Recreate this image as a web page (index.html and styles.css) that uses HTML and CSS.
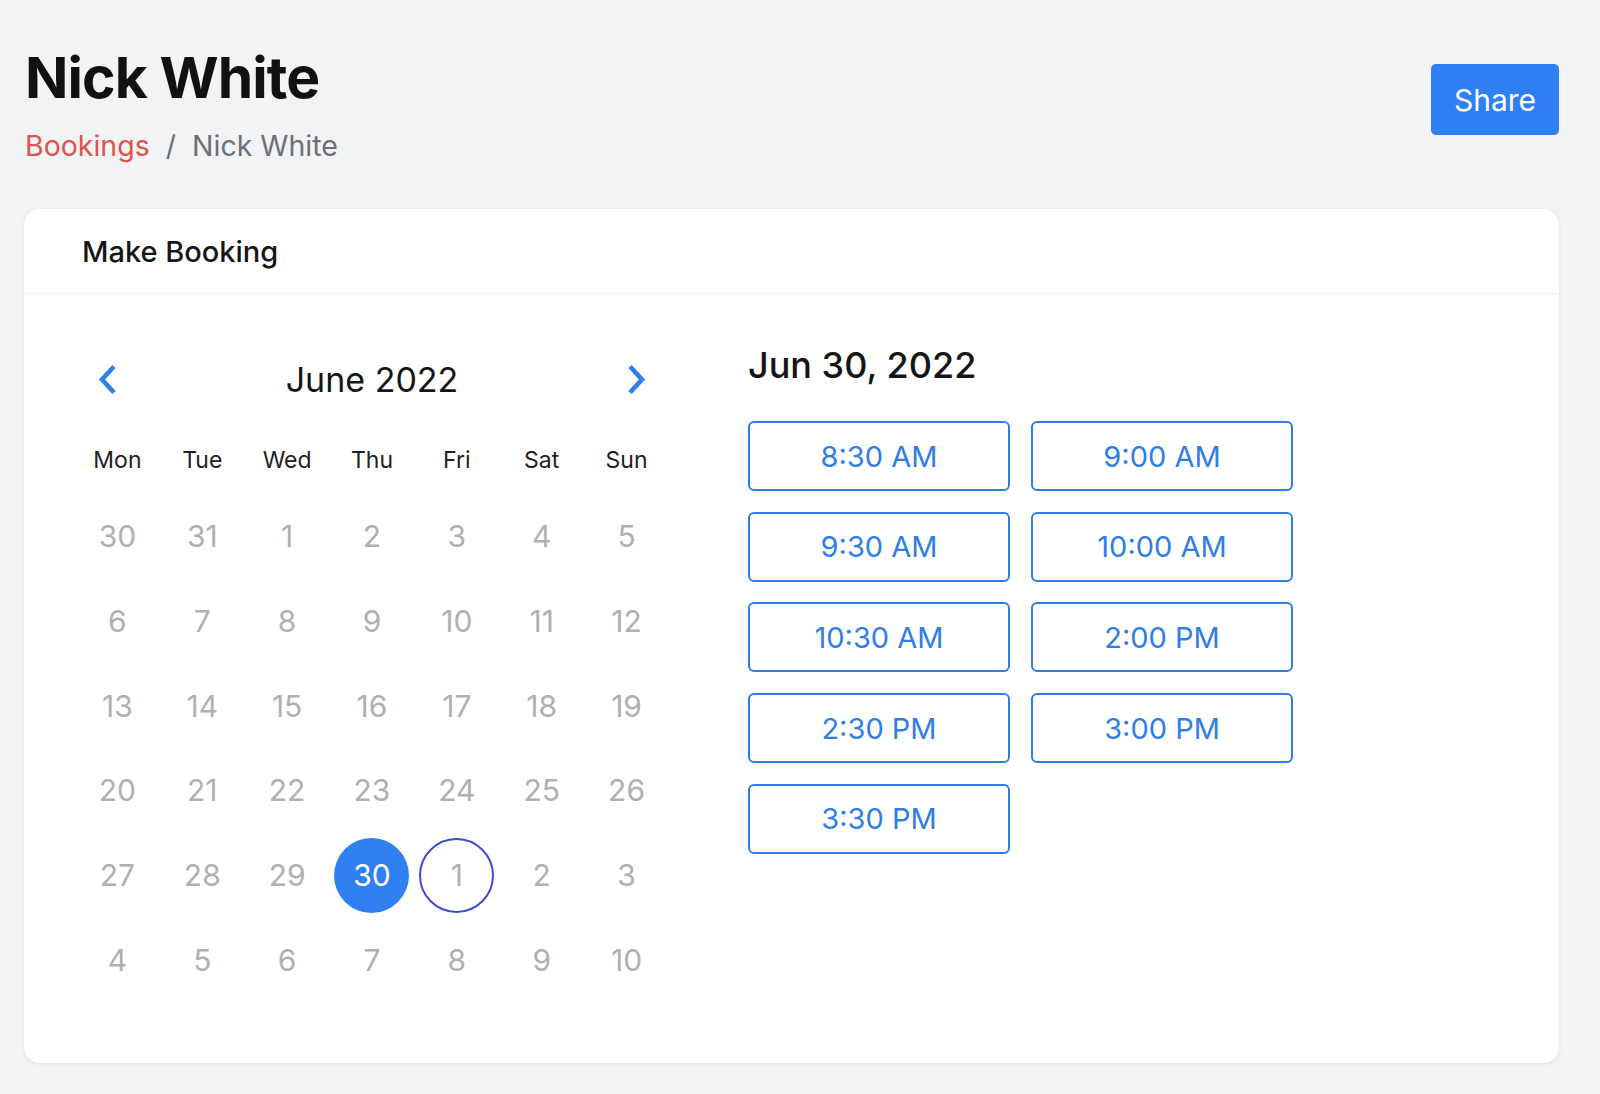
FILE: index.html
```html
<!DOCTYPE html>
<html lang="en">
<head>
<meta charset="utf-8">
<title>Nick White - Bookings</title>
<link rel="stylesheet" href="styles.css">
</head>
<body>
<div class="page">
  <header class="page-header">
    <div class="titles">
      <h1 class="title">Nick White</h1>
      <nav class="breadcrumb">
        <a class="crumb-link" href="#">Bookings</a>
        <span class="crumb-sep">/</span>
        <span class="crumb-current">Nick White</span>
      </nav>
    </div>
    <button class="share-btn">Share</button>
  </header>

  <section class="card">
    <div class="card-header">Make Booking</div>
    <div class="card-body">
      <div class="calendar">
        <div class="cal-nav">
          <button class="nav-btn" aria-label="Previous month">
            <svg viewBox="0 0 21 31" width="21" height="31"><path d="M17 2.5 L5 15.5 L17 28.5" fill="none" stroke="#2f7fe8" stroke-width="4.6" stroke-linecap="butt" stroke-linejoin="miter"/></svg>
          </button>
          <div class="cal-month">June 2022</div>
          <button class="nav-btn" aria-label="Next month">
            <svg viewBox="0 0 21 31" width="21" height="31"><path d="M4 2.5 L16 15.5 L4 28.5" fill="none" stroke="#2f7fe8" stroke-width="4.6" stroke-linecap="butt" stroke-linejoin="miter"/></svg>
          </button>
        </div>
        <div class="cal-weekdays">
          <span>Mon</span><span>Tue</span><span>Wed</span><span>Thu</span><span>Fri</span><span>Sat</span><span>Sun</span>
        </div>
        <div class="cal-grid">
          <span class="day">30</span><span class="day">31</span><span class="day">1</span><span class="day">2</span><span class="day">3</span><span class="day">4</span><span class="day">5</span>
          <span class="day">6</span><span class="day">7</span><span class="day">8</span><span class="day">9</span><span class="day">10</span><span class="day">11</span><span class="day">12</span>
          <span class="day">13</span><span class="day">14</span><span class="day">15</span><span class="day">16</span><span class="day">17</span><span class="day">18</span><span class="day">19</span>
          <span class="day">20</span><span class="day">21</span><span class="day">22</span><span class="day">23</span><span class="day">24</span><span class="day">25</span><span class="day">26</span>
          <span class="day">27</span><span class="day">28</span><span class="day">29</span><span class="day"><span class="day-selected">30</span></span><span class="day"><span class="day-today">1</span></span><span class="day">2</span><span class="day">3</span>
          <span class="day">4</span><span class="day">5</span><span class="day">6</span><span class="day">7</span><span class="day">8</span><span class="day">9</span><span class="day">10</span>
        </div>
      </div>

      <div class="slots">
        <h2 class="slots-date">Jun 30, 2022</h2>
        <div class="slot-grid">
          <button class="slot">8:30 AM</button>
          <button class="slot">9:00 AM</button>
          <button class="slot">9:30 AM</button>
          <button class="slot">10:00 AM</button>
          <button class="slot">10:30 AM</button>
          <button class="slot">2:00 PM</button>
          <button class="slot">2:30 PM</button>
          <button class="slot">3:00 PM</button>
          <button class="slot">3:30 PM</button>
        </div>
      </div>
    </div>
  </section>
</div>
</body>
</html>
```

FILE: styles.css
```css
* { box-sizing: border-box; }

html, body {
  margin: 0;
  padding: 0;
  background: #f2f3f5;
  font-family: Inter, "Noto Sans", "Liberation Sans", sans-serif;
  color: #1a1a1a;
}

.page {
  padding: 42px 41px 32px 24px;
}

.page-header {
  display: flex;
  justify-content: space-between;
  align-items: flex-start;
}

.title {
  margin: 0;
  font-size: 57px;
  line-height: 72px;
  font-weight: 700;
  letter-spacing: -0.9px;
  color: #111;
  padding-left: 1px;
}

.breadcrumb {
  margin-top: 15px;
  display: flex;
  align-items: baseline;
  gap: 16px;
  font-size: 28.5px;
  line-height: 34px;
  padding-left: 1px;
}

.crumb-link {
  color: #dc5550;
  text-decoration: none;
}

.crumb-sep,
.crumb-current {
  color: #6c7178;
}

.share-btn {
  margin-top: 22px;
  width: 128px;
  height: 71px;
  border: none;
  border-radius: 5px;
  background: #2f80f2;
  color: #fff;
  font-family: inherit;
  font-size: 30px;
  font-weight: 400;
  cursor: pointer;
}

.card {
  margin-top: 46px;
  background: #fff;
  border-radius: 16px;
  box-shadow: 0 1px 5px rgba(0, 0, 0, 0.07);
}

.card-header {
  height: 85px;
  display: flex;
  align-items: center;
  padding-left: 58px;
  font-size: 29px;
  font-weight: 500;
  color: #161616;
  border-bottom: 1px solid #ebebeb;
}

.card-body {
  display: flex;
  gap: 79px;
  padding: 47px 0 61px 51px;
}

.calendar {
  width: 594px;
}

.cal-nav {
  margin-top: 8px;
  height: 60px;
  display: flex;
  align-items: center;
  justify-content: space-between;
  padding: 0 22px 0 22px;
}

.nav-btn {
  background: none;
  border: none;
  padding: 0;
  display: flex;
  cursor: pointer;
}

.cal-month {
  font-size: 34px;
  font-weight: 400;
  color: #151515;
}

.cal-weekdays {
  margin-top: 16px;
  display: grid;
  grid-template-columns: repeat(7, 1fr);
  height: 69px;
  align-items: center;
  text-align: center;
  font-size: 23px;
  color: #222;
}

.cal-grid {
  display: grid;
  grid-template-columns: repeat(7, 1fr);
  grid-auto-rows: 84.7px;
}

.day {
  display: flex;
  align-items: center;
  justify-content: center;
  font-size: 30px;
  color: #b0b0b0;
}

.day-selected,
.day-today {
  width: 75px;
  height: 75px;
  border-radius: 50%;
  display: flex;
  align-items: center;
  justify-content: center;
}

.day-selected {
  background: #3180f2;
  color: #fff;
}

.day-today {
  border: 2px solid #3a4cd4;
  color: #b0b0b0;
}

.slots {
  display: flex;
  flex-direction: column;
}

.slots-date {
  margin: 2px 0 0;
  font-size: 36px;
  line-height: 45px;
  font-weight: 500;
  color: #151515;
}

.slot-grid {
  margin-top: 33px;
  display: grid;
  grid-template-columns: repeat(2, 262px);
  grid-auto-rows: 70px;
  column-gap: 21px;
  row-gap: 20.7px;
}

.slot {
  background: #fff;
  border: 2px solid #2f7de6;
  border-radius: 6px;
  color: #2f7de6;
  font-family: inherit;
  font-size: 29px;
  font-weight: 400;
  cursor: pointer;
}
```
